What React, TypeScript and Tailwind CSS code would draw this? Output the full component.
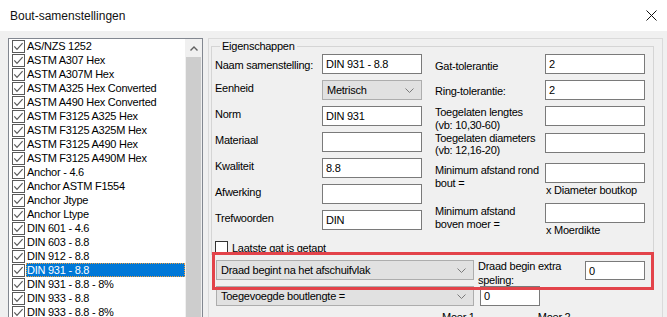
import React from 'react'

const items = [
  'AS/NZS 1252',
  'ASTM A307 Hex',
  'ASTM A307M Hex',
  'ASTM A325 Hex Converted',
  'ASTM A490 Hex Converted',
  'ASTM F3125 A325 Hex',
  'ASTM F3125 A325M Hex',
  'ASTM F3125 A490 Hex',
  'ASTM F3125 A490M Hex',
  'Anchor - 4.6',
  'Anchor ASTM F1554',
  'Anchor Jtype',
  'Anchor Ltype',
  'DIN 601 - 4.6',
  'DIN 603 - 8.8',
  'DIN 912 - 8.8',
  'DIN 931 - 8.8',
  'DIN 931 - 8.8 - 8%',
  'DIN 933 - 8.8',
  'DIN 933 - 8.8 - 8%',
  'DIN 933 - 10.9',
]

const SELECTED = 'DIN 931 - 8.8'

function Check() {
  return (
    <svg width="13" height="13" viewBox="0 0 13 13" className="shrink-0">
      <rect x="0.5" y="0.5" width="12" height="12" fill="#fff" stroke="#5a5a5a" />
      <path d="M2.3 6.3 L5 9.3 L10.6 3.2" fill="none" stroke="#5a5a5a" strokeWidth="1.2" />
    </svg>
  )
}

function Chevron() {
  return (
    <svg width="9" height="5" viewBox="0 0 9 5" className="shrink-0">
      <path d="M0.5 0.5 L4.5 4.5 L8.5 0.5" fill="none" stroke="#7a7a7a" strokeWidth="1" />
    </svg>
  )
}

function Input({ value, w = 'w-[100px]', h = 'h-[20px]' }: { value?: string; w?: string; h?: string }) {
  return (
    <div className={`${w} ${h} shrink-0 bg-white border border-[#7a7a7a] pl-[3px] flex items-center leading-[14px]`}>
      {value}
    </div>
  )
}

function Select({ value, w }: { value: string; w: string }) {
  return (
    <div className={`${w} h-[20px] shrink-0 bg-[#e1e1e1] border border-[#adadad] pl-[4px] pr-[7px] flex items-center justify-between`}>
      <span>{value}</span>
      <Chevron />
    </div>
  )
}

export default function App() {
  return (
    <div className="w-[667px] h-[317px] overflow-hidden bg-[#f0f0f0] flex flex-col font-['Liberation_Sans',Arial,sans-serif] text-[11px] tracking-[-0.25px] text-black">
      {/* title bar */}
      <div className="h-[31px] shrink-0 bg-white flex items-center justify-between pl-[10px] pr-[10px]">
        <span className="text-[12px] tracking-normal text-[#111]">Bout-samenstellingen</span>
        <svg width="11" height="11" viewBox="0 0 11 11">
          <path d="M0.5 0.5 L10.5 10.5 M10.5 0.5 L0.5 10.5" stroke="#111" strokeWidth="1" />
        </svg>
      </div>

      <div className="flex flex-1 min-h-0 pt-[7px] pl-[8px]">
        {/* list box */}
        <div className="w-[195px] h-[300px] shrink-0 bg-white border border-[#828790] flex">
          <div className="w-[176px] flex flex-col">
            {items.map(it => (
              <div key={it} className="h-[14px] shrink-0 flex items-center pl-[3px] leading-[14px]">
                <Check />
                <span
                  className={`ml-[1px] pl-[1px] flex-1 h-[14px] whitespace-nowrap ${
                    it === SELECTED
                      ? 'bg-[#0078d7] text-white outline outline-1 outline-dotted outline-[#f0a040] -outline-offset-1'
                      : ''
                  }`}
                >
                  {it}
                </span>
              </div>
            ))}
          </div>
          <div className="w-[17px] bg-[#f0f0f0] flex flex-col">
            <div className="h-[18px] flex items-center justify-center">
              <svg width="8" height="5" viewBox="0 0 8 5">
                <path d="M0.5 4.5 L4 1 L7.5 4.5" fill="none" stroke="#606060" strokeWidth="1.4" />
              </svg>
            </div>
            <div className="flex-1 mx-[1px] bg-[#cdcdcd]" />
          </div>
        </div>

        {/* properties panel */}
        <div className="relative ml-[5px] w-[455px] h-[300px] border-l border-t border-r border-[#dadada] flex flex-col">
          <fieldset className="ml-[2px] w-[443px] h-[216px] border border-[#d5d5d5] pl-[3px] pt-[1px] flex flex-col">
            <legend className="ml-[5px] px-[2px] leading-[14px]">Eigenschappen</legend>

            <div className="flex h-[185px]">
              {/* left column */}
              <div className="w-[207px] flex flex-col gap-[6px]">
                <div className="flex">
                  <span className="w-[107px] pt-[4px] leading-[14px]">Naam samenstelling:</span>
                  <Input value="DIN 931 - 8.8" />
                </div>
                <div className="flex">
                  <span className="w-[107px] pt-[1px] leading-[14px]">Eenheid</span>
                  <Select value="Metrisch" w="w-[100px]" />
                </div>
                {[
                  ['Norm', 'DIN 931'],
                  ['Materiaal', ''],
                  ['Kwaliteit', '8.8'],
                  ['Afwerking', ''],
                  ['Trefwoorden', 'DIN'],
                ].map(([l, v]) => (
                  <div key={l} className="flex">
                    <span className="w-[107px] pt-[1px] leading-[14px]">{l}</span>
                    <Input value={v} />
                  </div>
                ))}
              </div>

              {/* right column */}
              <div className="ml-[13px] w-[210px] flex flex-col">
                <div className="flex h-[20px]">
                  <span className="w-[110px] pt-[5px] leading-[14px]">Gat-tolerantie</span>
                  <Input value="2" />
                </div>
                <div className="flex h-[20px] mt-[6px]">
                  <span className="w-[110px] pt-[4px] leading-[14px]">Ring-tolerantie:</span>
                  <Input value="2" />
                </div>
                <div className="flex h-[20px] mt-[6px] items-start">
                  <span className="w-[110px] leading-[13px] whitespace-nowrap">
                    Toegelaten lengtes<br />(vb: 10,30-60)
                  </span>
                  <Input />
                </div>
                <div className="flex h-[20px] mt-[7px] items-start">
                  <span className="w-[110px] -mt-[1px] leading-[12px] whitespace-nowrap">
                    Toegelaten diameters<br />(vb: 12,16-20)
                  </span>
                  <Input />
                </div>
                <div className="flex mt-[10px] items-start">
                  <span className="w-[110px] pt-[1px] leading-[13px] whitespace-nowrap">
                    Minimum afstand rond<br />bout =
                  </span>
                  <div className="flex flex-col">
                    <Input />
                    <span className="pl-[1px] leading-[14px] whitespace-nowrap">x Diameter boutkop</span>
                  </div>
                </div>
                <div className="flex mt-[6px] items-start">
                  <span className="w-[110px] pt-[2px] leading-[13px] whitespace-nowrap">
                    Minimum afstand<br />boven moer =
                  </span>
                  <div className="flex flex-col">
                    <Input />
                    <span className="pl-[1px] leading-[14px] whitespace-nowrap">x Moerdikte</span>
                  </div>
                </div>
              </div>
            </div>

            <div className="flex items-center h-[13px] mt-[2px]">
              <span className="w-[13px] h-[13px] bg-white border border-[#333]" />
              <span className="ml-[4px] leading-[14px]">Laatste gat is getapt</span>
            </div>
          </fieldset>

          {/* thread rows */}
          <div className="pl-[7px] mt-[5px] flex flex-col">
            <div className="flex h-[20px] items-start">
              <Select value="Draad begint na het afschuifvlak" w="w-[258px]" />
              <span className="ml-[4px] -mt-[1px] w-[107px] leading-[14px] whitespace-nowrap">
                Draad begin extra<br />speling:
              </span>
              <div className="mt-[1px]">
                <Input value="0" w="w-[60px]" h="h-[19px]" />
              </div>
            </div>
            <div className="flex mt-[6px] h-[20px] relative">
              <Select value="Toegevoegde boutlengte =" w="w-[258px]" />
              <div className="ml-[6px]">
                <Input value="0" w="w-[60px]" />
              </div>
            </div>
            <div className="flex mt-[4px] leading-[14px]">
              <span className="ml-[226px]">Moer 1</span>
              <span className="ml-[63px]">Moer 2</span>
            </div>
          </div>

          {/* highlight frame */}
          <div className="absolute left-[3px] top-[213px] w-[442px] h-[38px] border-[3px] border-[#e3434a] pointer-events-none" />
        </div>
      </div>
    </div>
  )
}
